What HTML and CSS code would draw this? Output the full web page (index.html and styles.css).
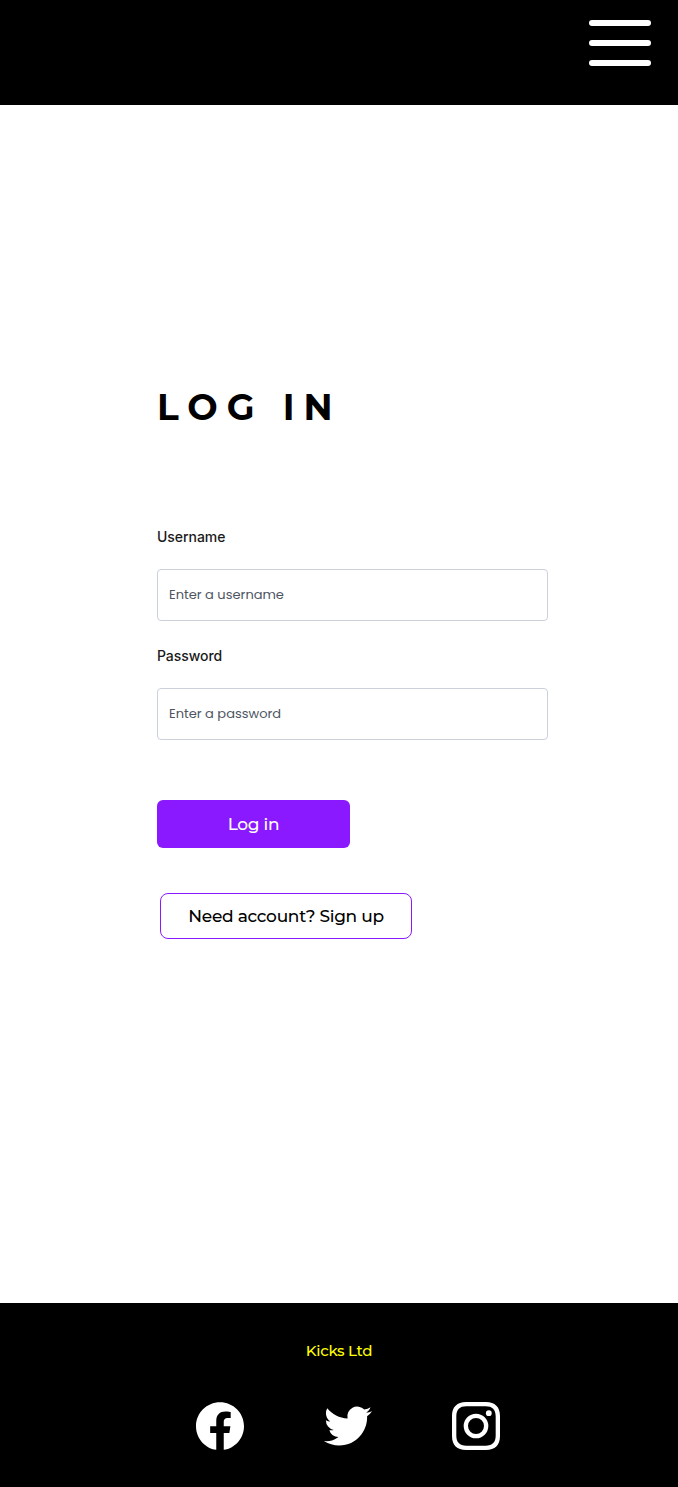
FILE: index.html
```html
<!DOCTYPE html>
<html lang="en">
<head>
<meta charset="utf-8">
<title>Log in</title>
<link rel="stylesheet" href="styles.css">
</head>
<body>
<header class="topbar">
  <button class="menu" aria-label="Menu"><span class="bar"></span><span class="bar"></span><span class="bar"></span></button>
</header>
<main class="page">
  <h1 class="title">LOG IN</h1>
  <form class="form">
    <label class="label" for="username">Username</label>
    <input class="input user" id="username" type="text" placeholder="Enter a username">
    <label class="label" for="password">Password</label>
    <input class="input pass" id="password" type="password" placeholder="Enter a password">
    <button class="submit" type="button"><span>Log in</span></button>
    <a class="signup"><span>Need account? Sign up</span></a>
  </form>
</main>
<footer class="footer">
  <p class="company">Kicks Ltd</p>
  <nav class="social">
    <svg class="icon" viewBox="0 0 24 24"><path d="M24 12.073c0-6.627-5.373-12-12-12s-12 5.373-12 12c0 5.99 4.388 10.954 10.125 11.854v-8.385H7.078v-3.47h3.047V9.43c0-3.007 1.792-4.669 4.533-4.669 1.312 0 2.686.235 2.686.235v2.953H15.83c-1.491 0-1.956.925-1.956 1.874v2.25h3.328l-.532 3.47h-2.796v8.385C19.612 23.027 24 18.062 24 12.073z"/></svg>
    <svg class="icon" viewBox="0 0 24 24"><path d="M23.953 4.57a10 10 0 01-2.825.775 4.958 4.958 0 002.163-2.723c-.951.555-2.005.959-3.127 1.184a4.92 4.92 0 00-8.384 4.482C7.69 8.095 4.067 6.13 1.64 3.162a4.822 4.822 0 00-.666 2.475c0 1.71.87 3.213 2.188 4.096a4.904 4.904 0 01-2.228-.616v.06a4.923 4.923 0 003.946 4.827 4.996 4.996 0 01-2.212.085 4.936 4.936 0 004.604 3.417 9.867 9.867 0 01-6.102 2.105c-.39 0-.779-.023-1.17-.067a13.995 13.995 0 007.557 2.209c9.053 0 13.998-7.496 13.998-13.985 0-.21 0-.42-.015-.63A9.935 9.935 0 0024 4.59z"/></svg>
    <svg class="icon" viewBox="0 0 24 24"><path fill-rule="evenodd" d="M7 0H17C21.5 0 24 2.500 24 7V17C24 21.500 21.500 24 17 24H7C2.500 24 0 21.500 0 17V7C0 2.500 2.500 0 7 0ZM7.200 2.160C3.800 2.160 2.160 3.800 2.160 7.200V16.800C2.160 20.200 3.800 21.840 7.200 21.840H16.800C20.200 21.840 21.840 20.200 21.840 16.800V7.200C21.840 3.800 20.200 2.160 16.800 2.160Z"/><path d="M12 5.838a6.162 6.162 0 100 12.324 6.162 6.162 0 000-12.324zM12 16a4 4 0 110-8 4 4 0 010 8z"/><circle cx="18.406" cy="5.594" r="1.440"/></svg>
  </nav>
</footer>
</body>
</html>
```
FILE: styles.css
```css
* { box-sizing: border-box; }
body {
  margin: 0;
  min-height: 1487px;
  display: flex;
  flex-direction: column;
  background: #fff;
  font-family: Montserrat, Inter, sans-serif;
}
.topbar {
  height: 105px;
  padding: 20px 27px 0 0;
  display: flex;
  justify-content: flex-end;
  align-items: flex-start;
  background: #000;
}
.menu {
  width: 62px;
  padding: 0;
  border: 0;
  background: none;
  display: flex;
  flex-direction: column;
  gap: 14px;
}
.bar { width: 62px; height: 6px; border-radius: 3px; background: #fff; }
.page { flex: 1; padding: 277px 130px 0 157px; }
.title {
  margin: 0;
  font-size: 36px;
  line-height: 50px;
  font-weight: 700;
  letter-spacing: 9px;
  white-space: nowrap;
}
.form { padding-top: 95px; display: flex; flex-direction: column; align-items: flex-start; }
.label {
  font: 500 14px/20px Inter, sans-serif;
  letter-spacing: -0.05px;
  color: #1a1a1a;
}
.input {
  width: 391px;
  height: 52px;
  margin: 22px 0 25px;
  padding: 0 11px;
  border: 1px solid #cbd0dc;
  border-radius: 4px;
  background: #fff;
  font: 400 13px/20px Poppins, Inter, sans-serif;
}
.input::placeholder { color: #4d5562; opacity: 1; }
.submit {
  width: 193px;
  height: 48px;
  margin-top: 35px;
  padding: 0;
  border: 0;
  border-radius: 6px;
  background: #8a19ff;
  color: #fff;
  font: 500 17px/24px Montserrat, Inter, sans-serif;
  letter-spacing: -0.3px;
}
.signup {
  width: 252px;
  height: 46px;
  margin: 45px 0 0 3px;
  display: flex;
  align-items: center;
  justify-content: center;
  border: 1px solid #8a19ff;
  border-radius: 8px;
  color: #000;
  font-size: 17px;
  font-weight: 500;
  letter-spacing: -0.28px;
  white-space: nowrap;
}
.footer {
  height: 184px;
  padding-top: 38px;
  background: #000;
  display: flex;
  flex-direction: column;
  align-items: center;
}
.company { margin: 0; color: #ff0; font-size: 15px; line-height: 20px; font-weight: 500; letter-spacing: -0.3px; }
.social { display: flex; gap: 80px; padding-left: 18px; margin-top: 41px; }
.icon { width: 48px; height: 48px; fill: #fff; }
```
